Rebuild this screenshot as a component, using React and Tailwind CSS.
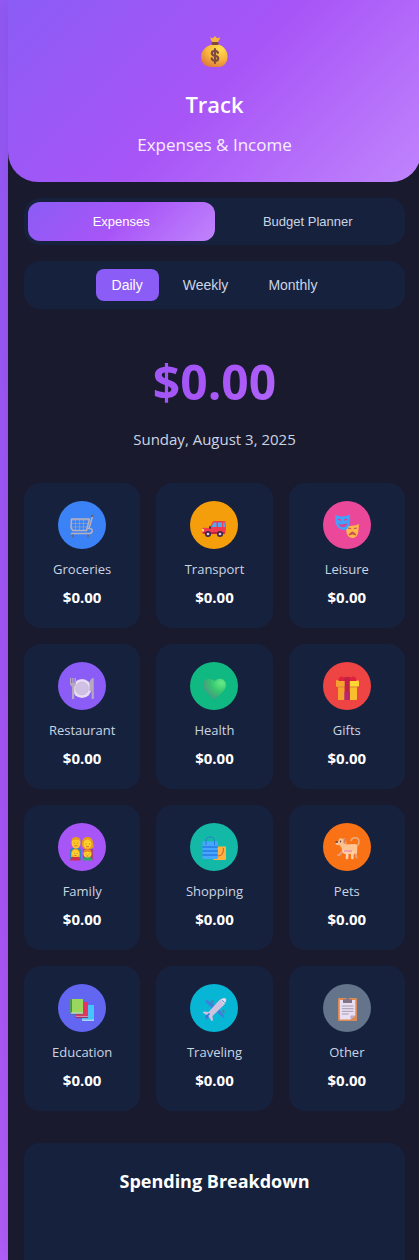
import { useState } from "react";

function MoneyBag() {
  return (
    <svg viewBox="0 0 32 32" className="h-8 w-8" aria-hidden="true">
      <defs>
        <radialGradient id="bag" cx="0.7" cy="0.2" r="0.95">
          <stop offset="0" stopColor="#ffe14d" />
          <stop offset="0.5" stopColor="#f9b53c" />
          <stop offset="1" stopColor="#d9713c" />
        </radialGradient>
      </defs>
      <path d="M11 1.500l2.800.8L16 0l2 2.300 3.300-.8-2.500 5h-5.400z" fill="#f9b53c" />
      <path d="M13 8.500h6.500c5.500 1.500 9 6.500 9 12 0 6-3.500 10.500-9 10.500h-7C6 31 2 27 2 20.500c0-5.500 5-10.500 11-12z" fill="url(#bag)" />
      <rect x="12.500" y="6" width="7" height="3" rx="1" fill="#7d4a3c" />
      <path d="M19 16.800c-.5-1.500-1.600-2-3.200-2-1.800 0-3 .8-3 2.400 0 3.800 6.400 1.700 6.400 5.200 0 1.500-1.200 2.400-3.200 2.400-1.700 0-3-.7-3.300-2.400M16 13v14" fill="none" stroke="#814b43" strokeWidth="2.200" strokeLinecap="round" />
    </svg>
  );
}

const drawings = {
  groceries: (
    <g fill="none" stroke="#b9b1bd" strokeLinecap="round" strokeLinejoin="round">
      <path d="M1 5h18M1.500 8.500h17M1.500 12h16M5.500 4.500v11M9.500 4.500v11M13.500 4.500v11" stroke="#9ba0b5" strokeWidth="0.800" />
      <path d="M1.500 4h18l-3 11.500H3L1 13z" strokeWidth="1.500" />
      <path d="M22.500 1.500L19 13.500M18 13.500h2c3 0 3 5-.5 5H1.500" strokeWidth="1.500" />
      <path d="M22 1h.5" stroke="#625866" strokeWidth="1.800" />
      <path d="M3 20.500v1M18 20.500v1" stroke="#716673" strokeWidth="2" />
    </g>
  ),
  transport: (
    <>
      <path d="M7.500 13L10.500 7Q11 6 12.500 6H22q1.500 0 1.500 2l.5 6-1 5H2Q0 19 0 17v-2.500Q0 13 2 12.800z" fill="#f23b50" />
      <path d="M9.500 12l2-4.500h3V12zM16 7.500h4V12h-4zM21.200 7.500h1.300l.6 4.500h-1.900z" fill="#4bacf4" />
      <path d="M1 17h21.500v2H2z" fill="#be263f" />
      <path d="M0 14h2v2.500H0z" fill="#ffd35a" />
      <rect x="7" y="11" width="2" height="3" rx="1" fill="#47314f" />
      <g fill="#d7c8e7" stroke="#3d2948" strokeWidth="1.700">
        <circle cx="6" cy="19" r="2.200" />
        <circle cx="18" cy="19" r="2.200" />
      </g>
    </>
  ),
  leisure: (
    <>
      <path d="M11 10.500c4 .8 8 .6 13-1.500l-.8 8.500c-.4 3-3 5.500-5.500 5.500-3.500 0-6-3-6.200-6z" fill="#ffb84a" />
      <path d="M13.300 13.500q1.500-1 3 .5M18.800 14q1.500-1.500 3-.8M14 20q3.500-6 7 0-3.500-2-7 0" stroke="#c7544f" strokeWidth="1" fill="#c7544f" />
      <path d="M0 0c5 2 10 2 15-.5l-.7 9C14 13 11.500 15.500 8.500 15 4 14.500 1 11 .6 7z" fill="#40a3ff" />
      <path d="M2.500 5q2-1.500 3.500.5M9 5.500Q10.500 3.500 12.500 5" stroke="#d64494" strokeWidth="1.200" fill="none" />
      <path d="M3 8.500q4.500 2 9.500-.5c-1 5.500-7.500 5.500-9.500.5z" fill="#d64494" />
    </>
  ),
  restaurant: (
    <>
      <circle cx="12" cy="12.500" r="9.500" fill="#e6daf4" />
      <circle cx="12" cy="12.500" r="6.300" fill="#d0c1e4" stroke="#c2b2d6" strokeWidth="0.700" />
      <path d="M0 2h1.200v5h1V2h1.400v5h1V2H6v6.500L4.200 11v12H2V11L0 8.500z" fill="#b4a9bd" />
      <path d="M23.800 2v21h-2.200v-8H19.500V7c0-3 2-5 4.300-5z" fill="#b4a9bd" />
    </>
  ),
  health: (
    <>
      <defs>
        <radialGradient id="heart" cx="0.8" cy="0.2" r="0.9">
          <stop offset="0" stopColor="#67ea87" />
          <stop offset="0.5" stopColor="#36c46f" />
          <stop offset="1" stopColor="#508f86" />
        </radialGradient>
      </defs>
      <path d="M12.500 5.500C10 1.500 3 1.500 1.200 7c-1.700 6 6 11.500 11.300 16.500C18 18.500 25.500 13 23.800 7c-1.800-5.500-8.800-5.500-11.300-1.500z" fill="url(#heart)" />
    </>
  ),
  gifts: (
    <>
      <path d="M3 9h19v14q0 1-1 1H4q-1 0-1-1z" fill="#f8be2d" />
      <rect x="1" y="4.500" width="23" height="6" rx="1" fill="#ffd735" />
      <path d="M1 4.500h8v6H2q-1 0-1-1zM3 10.500h6V24H4q-1 0-1-1z" fill="#f5a12f" />
      <path d="M3 10.500h19v1H3z" fill="#db8730" />
      <path d="M3.500 5C3 2 6-1 9 1.500c2-1 5-1 7 0C19-1 22 2 21.500 5z" fill="#dc223d" />
      <path d="M9.500 1.500h5.300V24H9.500z" fill="#c31f4b" />
      <path d="M9.500 16h5.300v8H9.500z" fill="#b62673" />
    </>
  ),
  family: (
    <>
      <path d="M0 23V14q0-3 3-3h5q3 0 3 3v9z" fill="#2888bd" />
      <path d="M13 23v-9q0-3 3-3h5q2 0 2 3v9z" fill="#a9447c" />
      <path d="M12 9V5.500C12 2 14.500 0 17.500 0S23 2 23 5.500L24 10l-3 2h-7z" fill="#e79a21" />
      <ellipse cx="6" cy="6" rx="4.500" ry="5.500" fill="#ffc623" />
      <path d="M1.500 4Q1.500 0 6 0t4.500 4Q6 1 1.500 4z" fill="#e69d21" />
      <ellipse cx="17.500" cy="7" rx="4" ry="4.500" fill="#ffd02b" />
      <path d="M1 20q-1-8 4.500-8.500Q11 12 10 20z" fill="#f29d23" />
      <path d="M0 23.500q1-4 5.500-4t5 4z" fill="#d52b4e" />
      <path d="M12.500 23.500q1-4 5-4t5 4z" fill="#2aac65" />
      <circle cx="5.500" cy="16.500" r="3.600" fill="#ffd02b" />
      <circle cx="17.500" cy="16.500" r="4" fill="#ffd02b" />
      <path d="M13.500 16q0-4 4-4t4 4q-4-3-8 0z" fill="#e48b27" />
      <path d="M4 6h.6M7.600 6h.6M15.700 7h.6M19 7h.6M4 16.500h.5M6.800 16.500h.5M15.800 17h.5M18.800 17h.5" stroke="#795044" strokeWidth="1" />
      <path d="M4.500 8.800h3M16 9.700h3M4.500 18.500h2M16.500 19h2" stroke="#cf4d37" strokeWidth="0.800" />
    </>
  ),
  shopping: (
    <>
      <path d="M11 9.500h13V22q0 1-1 1H12q-1 0-1-1z" fill="#ffb33f" />
      <path d="M16 19q5.500 0 5.500-8" stroke="#da653c" strokeWidth="1.200" fill="none" />
      <path d="M.5 4.500h15.300V22H1.500q-1 0-1-1z" fill="#45a7ff" />
      <path d="M.5 10h15.300M.5 14h15.300M.5 18h15.300" stroke="#287ae3" strokeWidth="1.400" />
      <path d="M4 8V4.500Q4 0 8.300 0t4.200 4.500V8" fill="none" stroke="#297bce" strokeWidth="1" />
    </>
  ),
  pets: (
    <>
      <path d="M16 3.500Q17 .8 20 .8q4 0 4 4Q24 8.500 20.500 9" fill="none" stroke="#e7ad83" strokeWidth="1.500" strokeLinecap="round" />
      <path d="M7 15l-2.500 3H3M20 14l1.500 6.500" stroke="#e39d7c" strokeWidth="2" fill="none" strokeLinecap="round" />
      <path d="M9 7.500l11-.5q2 0 2.300 3l-.3 7-2-.5-2 .5H11q-3 .5-4-3L6.500 9z" fill="#ffc694" />
      <path d="M9 14l3.200 2.500-.2 4.500M18.500 15l-1.200 2v4" stroke="#ffd0aa" strokeWidth="2.600" fill="none" strokeLinecap="round" />
      <path d="M9 14h8" stroke="#ef91af" strokeWidth="1.500" />
      <path d="M4 2l2-1 1 1 3-1 1.500 4.500-1 5H6L4.500 8H2Q.5 8 .5 6l3-2z" fill="#ffc08d" />
      <path d="M8.500 1l2.500 1-.5 5-2-1z" fill="#cb826e" />
      <path d="M1 5h1.500M5.500 4.200v.6" stroke="#563e4c" strokeWidth="1.300" strokeLinecap="round" />
    </>
  ),
  education: (
    <>
      <path d="M12 7h12v16H13l-1-1z" fill="#46c5fa" />
      <path d="M12 22.200h12" stroke="#d7d7ec" strokeWidth="1" />
      <path d="M6 4h12v15H6z" fill="#e9305e" />
      <path d="M6 18.500h12" stroke="#ce8caf" strokeWidth="1" />
      <path d="M5.500 19.600h12.500" stroke="#a62651" strokeWidth="1" />
      <path d="M.3 2Q.3 1 1.300 1H13v14H.3z" fill="#99d75e" />
      <path d="M.3 2Q.3 1 1.300 1H2v15L.3 15z" fill="#40934c" />
      <path d="M1 15.200h12" stroke="#d6dce5" strokeWidth="1.200" />
      <path d="M1 16.300h12" stroke="#377f59" strokeWidth="0.700" />
    </>
  ),
  traveling: (
    <>
      <path d="M13 7L4 1.500 3.500 4l6.500 6zM17 11l5.500 7.500-1 1.500-6.500-5.500zM4 17l4.500-.5L6 21l-2 .5z" fill="#3f7edb" />
      <path d="M9 2.500h3v2H9zM20.500 12h2v3h-2z" fill="#69769b" />
      <path d="M17 2.500C19 .5 22-1 24 .5c1 2-.5 4.500-2 6.500L10.500 18l.5 4.500-1.500.5L6 17.500 1 15l.5-1.500 5 .5z" fill="#cfc1df" />
      <path d="M18.500 2.500Q21 0 23.500.8 24 3 22 6z" fill="#ebe0ef" />
      <path d="M20 2.200l2.500 2.500" stroke="#347ec4" strokeWidth="1" />
      <path d="M3.500 19.500l4-4" stroke="#2878d6" strokeWidth="1.600" />
    </>
  ),
  other: (
    <>
      <rect x="3" y="0" width="19" height="23" rx="1" fill="#dc8b55" />
      <path d="M4.800 2h15.500v15.500L15.500 21.500H4.800z" fill="#eadff2" />
      <path d="M20.300 17.500l-4.800 4v-3.300q0-.7.700-.7z" fill="#bba7ca" />
      <path d="M8 5V2q0-.8.800-.8H11q0-1.500 1.500-1.500T14 1.200h2.200q.8 0 .8.800v3z" fill="#827387" />
      <path d="M6.800 8h11.700M6.800 10.700h11.700M6.800 13.300h11.700M6.800 16h7" stroke="#a69ab1" strokeWidth="1" />
    </>
  ),
};

const categories = [
  { id: "groceries", name: "Groceries", color: "bg-[#3b82f6]" },
  { id: "transport", name: "Transport", color: "bg-[#f59e0b]" },
  { id: "leisure", name: "Leisure", color: "bg-[#ec4899]" },
  { id: "restaurant", name: "Restaurant", color: "bg-[#8b5cf6]" },
  { id: "health", name: "Health", color: "bg-[#10b981]" },
  { id: "gifts", name: "Gifts", color: "bg-[#ef4444]" },
  { id: "family", name: "Family", color: "bg-[#a855f7]" },
  { id: "shopping", name: "Shopping", color: "bg-[#14b8a6]" },
  { id: "pets", name: "Pets", color: "bg-[#f97316]" },
  { id: "education", name: "Education", color: "bg-[#6366f1]" },
  { id: "traveling", name: "Traveling", color: "bg-[#06b6d4]" },
  { id: "other", name: "Other", color: "bg-[#64748b]" },
];

function CategoryCard({ id, name, color }) {
  return (
    <button
      type="button"
      className="flex flex-col items-center rounded-2xl border-2 border-transparent bg-[#16213e] bg-clip-border py-4"
    >
      <span className={"flex h-12 w-12 items-center justify-center rounded-full " + color}>
        <svg viewBox="0 0 24 24" className="mt-1 h-6 w-6 overflow-visible" aria-hidden="true">
          {drawings[id]}
        </svg>
      </span>
      <span className="mt-2 text-[13px] leading-6 text-slate-300">{name}</span>
      <span className="mt-1 text-[15px] leading-[25px] font-bold text-white">$0.00</span>
    </button>
  );
}

export default function App() {
  const [tab, setTab] = useState("Expenses");
  const [period, setPeriod] = useState("Daily");

  return (
    <div className="flex min-h-screen overflow-hidden bg-[linear-gradient(180deg,#935af6_0%,#a855f7_70%,#b05ff8_100%)] pl-2 font-['Open_Sans','Noto_Sans',sans-serif]">
      <div className="-mr-[2px] flex min-w-0 flex-1 flex-col bg-[#1a1a2e] shadow-[0_0_20px_rgba(0,0,0,0.1)]">
        <header className="flex flex-col items-center rounded-b-[30px] bg-[linear-gradient(135deg,#8b5cf6_0%,#a855f7_50%,#c084fc_100%)] pt-9 pb-6 text-white">
          <MoneyBag />
          <h1 className="mt-5 text-[22px] leading-8 font-semibold">Track</h1>
          <p className="mt-3 text-[17px] leading-[26px] text-white/90">Expenses &amp; Income</p>
        </header>

        <main className="flex flex-1 flex-col px-4 pt-4">
          <nav className="flex rounded-2xl bg-[#16213e] p-1 font-['Liberation_Sans',sans-serif] text-[13px] leading-[15px] font-medium">
            {["Expenses", "Budget Planner"].map((name) => (
              <button
                key={name}
                type="button"
                onClick={() => setTab(name)}
                className={
                  "flex-1 rounded-xl py-3 " +
                  (tab === name
                    ? "bg-[linear-gradient(135deg,#8b5cf6_0%,#a855f7_50%,#c084fc_100%)] text-white"
                    : "text-slate-300")
                }
              >
                {name}
              </button>
            ))}
          </nav>

          <div className="mt-4 flex justify-center gap-2 rounded-2xl bg-[#16213e] p-2 font-['Liberation_Sans',sans-serif] text-sm leading-4">
            {["Daily", "Weekly", "Monthly"].map((name) => (
              <button
                key={name}
                type="button"
                onClick={() => setPeriod(name)}
                className={
                  "rounded-lg px-4 py-2 " +
                  (period === name ? "bg-[#8b5cf6] text-white" : "text-slate-300")
                }
              >
                {name}
              </button>
            ))}
          </div>

          <section className="pt-8 pb-8 text-center">
            <p className="bg-[linear-gradient(135deg,#8b5cf6_0%,#a855f7_50%,#c084fc_100%)] bg-clip-text text-5xl leading-[82px] font-bold text-transparent">
              $0.00
            </p>
            <p className="mt-1 text-[15px] leading-6 text-slate-300">Sunday, August 3, 2025</p>
          </section>

          <section className="grid grid-cols-3 gap-4">
            {categories.map((category) => (
              <CategoryCard key={category.id} {...category} />
            ))}
          </section>

          <section className="mt-8 flex-1 rounded-t-2xl bg-[#16213e] px-6 pt-6 text-center">
            <h2 className="text-lg leading-7 font-bold text-white">Spending Breakdown</h2>
          </section>
        </main>
      </div>
    </div>
  );
}
